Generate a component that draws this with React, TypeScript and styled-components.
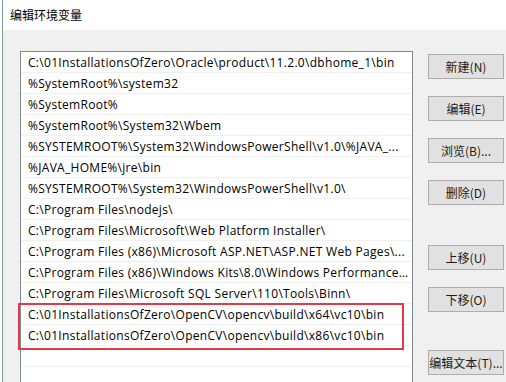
import React from "react";
import styled, { createGlobalStyle } from "styled-components";

const Global = createGlobalStyle`
  html, body { margin: 0; padding: 0; background: #ffffff; }
  body { font-family: "Segoe UI", "Open Sans", "Noto Sans CJK SC", sans-serif; }
`;

const Window = styled.div`
  width: 504px;
  height: 382px;
  margin-left: 2px;
  border-left: 1px solid #7f9d94;
  box-sizing: border-box;
  display: flex;
  flex-direction: column;
  overflow: hidden;
  background: #f0f0f0;
`;

const TitleBar = styled.div`
  height: 30px;
  flex: none;
  background: #ffffff;
  display: flex;
  align-items: center;
  padding: 0 0 2px 7px;
  box-sizing: border-box;
  font-family: "Noto Sans CJK SC", sans-serif;
  font-size: 12px;
  color: #000;
`;

const Body = styled.div`
  flex: 1;
  display: flex;
  align-items: flex-start;
  padding: 21px 0 0 17px;
  gap: 15px;
`;

const ListBox = styled.div`
  position: relative;
  width: 393px;
  height: 340px;
  flex: none;
  box-sizing: border-box;
  border: 1px solid #828790;
  border-bottom: none;
  background: #ffffff;
`;

const Row = styled.div`
  height: 21px;
  box-sizing: border-box;
  border-bottom: 1px solid #f0f0f0;
  padding: 0 3px 0 7px;
  font-family: "Open Sans", "Noto Sans CJK SC", sans-serif;
  font-size: 12px;
  letter-spacing: 0.3px;
  line-height: 21px;
  color: #000;
  white-space: nowrap;
  overflow: hidden;
  text-overflow: ellipsis;
`;

const Highlight = styled.div`
  position: absolute;
  left: -3px;
  top: 251px;
  width: 386px;
  height: 47px;
  box-sizing: border-box;
  border: 2.5px solid #e23a48;
  pointer-events: none;
`;

const ButtonColumn = styled.div`
  display: flex;
  flex-direction: column;
  padding-top: 3px;
`;

const Button = styled.button<{ $gap?: number }>`
  width: 76px;
  height: 25px;
  margin-bottom: ${(p) => p.$gap ?? 17}px;
  box-sizing: border-box;
  border: 1px solid #adadad;
  background: #e1e1e1;
  padding: 0;
  font-family: "Noto Sans CJK SC", sans-serif;
  font-size: 12px;
  color: #1a1a1a;
  white-space: nowrap;
  text-align: center;
`;

const rows = [
  "C:\\01InstallationsOfZero\\Oracle\\product\\11.2.0\\dbhome_1\\bin",
  "%SystemRoot%\\system32",
  "%SystemRoot%",
  "%SystemRoot%\\System32\\Wbem",
  "%SYSTEMROOT%\\System32\\WindowsPowerShell\\v1.0\\%JAVA_...",
  "%JAVA_HOME%\\jre\\bin",
  "%SYSTEMROOT%\\System32\\WindowsPowerShell\\v1.0\\",
  "C:\\Program Files\\nodejs\\",
  "C:\\Program Files\\Microsoft\\Web Platform Installer\\",
  "C:\\Program Files (x86)\\Microsoft ASP.NET\\ASP.NET Web Pages\\...",
  "C:\\Program Files (x86)\\Windows Kits\\8.0\\Windows Performance...",
  "C:\\Program Files\\Microsoft SQL Server\\110\\Tools\\Binn\\",
  "C:\\01InstallationsOfZero\\OpenCV\\opencv\\build\\x64\\vc10\\bin",
  "C:\\01InstallationsOfZero\\OpenCV\\opencv\\build\\x86\\vc10\\bin",
  "",
  "",
];

export default function App() {
  return (
    <>
      <Global />
      <Window>
        <TitleBar>编辑环境变量</TitleBar>
        <Body>
          <ListBox>
            {rows.map((r, i) => (
              <Row key={i}>{r}</Row>
            ))}
            <Highlight />
          </ListBox>
          <ButtonColumn>
            <Button>新建(N)</Button>
            <Button>编辑(E)</Button>
            <Button>浏览(B)...</Button>
            <Button $gap={40}>删除(D)</Button>
            <Button>上移(U)</Button>
            <Button $gap={38}>下移(O)</Button>
            <Button>编辑文本(T)...</Button>
          </ButtonColumn>
        </Body>
      </Window>
    </>
  );
}
